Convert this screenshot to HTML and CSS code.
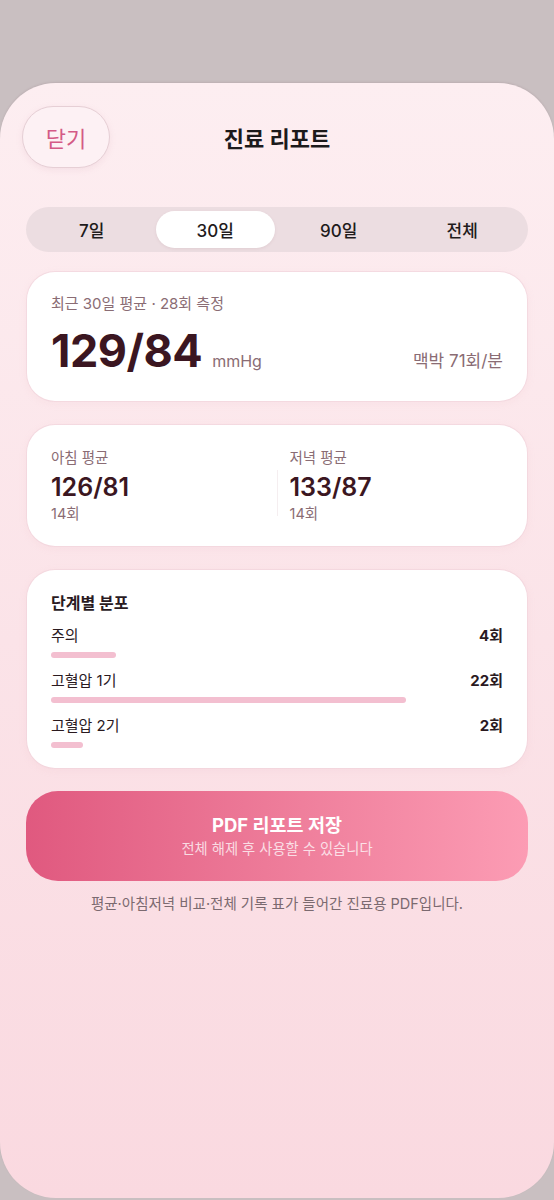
FILE: index.html
```html
<!DOCTYPE html>
<html lang="ko">
<head>
  <meta charset="UTF-8">
  <meta name="viewport" content="width=device-width, initial-scale=1.0">
  <title>진료 리포트</title>
  <link rel="stylesheet" href="styles.css">
</head>
<body>
  <div class="sheet">
    <!-- Top bar -->
    <header class="topbar">
      <button class="close-btn">닫기</button>
      <h1>진료 리포트</h1>
      <span></span>
    </header>

    <!-- Period selector -->
    <nav class="segments">
      <span class="seg">7일</span>
      <span class="seg active">30일</span>
      <span class="seg">90일</span>
      <span class="seg">전체</span>
    </nav>

    <!-- Summary -->
    <section class="card summary">
      <p class="muted lead">최근 30일 평균 · 28회 측정</p>
      <div class="summary-row">
        <span class="big">129/84</span>
        <span class="unit">mmHg</span>
        <span class="pulse">맥박 71회/분</span>
      </div>
    </section>

    <!-- Morning / evening -->
    <section class="card split">
      <div class="col">
        <p class="muted">아침 평균</p>
        <p class="mid">126/81</p>
        <p class="muted count">14회</p>
      </div>
      <div class="divider"></div>
      <div class="col">
        <p class="muted">저녁 평균</p>
        <p class="mid">133/87</p>
        <p class="muted count">14회</p>
      </div>
    </section>

    <!-- Distribution -->
    <section class="card dist">
      <h2>단계별 분포</h2>
      <div class="dist-row">
        <div class="dist-head"><span>주의</span><b>4회</b></div>
        <div class="bar" style="width: 14.3%"></div>
      </div>
      <div class="dist-row">
        <div class="dist-head"><span>고혈압 1기</span><b>22회</b></div>
        <div class="bar" style="width: 78.6%"></div>
      </div>
      <div class="dist-row">
        <div class="dist-head"><span>고혈압 2기</span><b>2회</b></div>
        <div class="bar" style="width: 7.1%"></div>
      </div>
    </section>

    <button class="pdf-btn">
      <span class="pdf-title">PDF 리포트 저장</span>
      <span class="pdf-sub">전체 해제 후 사용할 수 있습니다</span>
    </button>

    <p class="note">평균·아침저녁 비교·전체 기록 표가 들어간 진료용 PDF입니다.</p>
  </div>
</body>
</html>
```

FILE: styles.css
```css
/* General */
body {
  margin: 0;
  background: #c9bfc1;
  font-family: Inter, "Noto Sans CJK KR", sans-serif;
  color: #2a1a1f;
}

p, h1, h2 {
  margin: 0;
}

.sheet {
  margin-top: 83px;
  min-height: 1115px;
  box-sizing: border-box;
  padding: 23px 26px 0;
  border-radius: 56px;
  background: linear-gradient(180deg, #fdeef1 0%, #fbe3e8 50%, #fad9e0 100%);
  box-shadow: 0 -1px 2px rgba(120, 90, 100, 0.15);
}

/* Top bar */
.topbar {
  display: grid;
  grid-template-columns: 1fr auto 1fr;
  align-items: center;
  margin-left: -4px;
}

.close-btn {
  width: 88px;
  height: 62px;
  border: 1px solid #e6cfd5;
  border-radius: 31px;
  background: #fdf1f4;
  box-shadow: 0 2px 6px rgba(200, 150, 165, 0.15);
  color: #d45a86;
  font-family: inherit;
  font-size: 22px;
  justify-self: start;
}

.topbar h1 {
  font-size: 22px;
  font-weight: 700;
  color: #1c1a1b;
  margin-left: 4px;
}

/* Segmented control */
.segments {
  margin-top: 39px;
  height: 45px;
  box-sizing: border-box;
  padding: 4px;
  border-radius: 23px;
  background: #ecdde1;
  display: grid;
  grid-template-columns: repeat(4, 1fr);
}

.seg {
  display: flex;
  align-items: center;
  justify-content: center;
  border-radius: 19px;
  font-size: 17px;
  font-weight: 500;
  color: #1f1b1c;
}

.seg.active {
  background: #fff;
  box-shadow: 0 1px 3px rgba(160, 120, 130, 0.15);
  margin: 0 2px;
}

/* Cards */
.card {
  margin: 24px 1px 0;
  background: #fff;
  border-radius: 28px;
  box-shadow: 0 0 0 1px rgba(240, 210, 218, 0.6), 0 2px 8px rgba(220, 170, 185, 0.12);
  box-sizing: border-box;
}

.muted {
  font-size: 14.5px;
  line-height: 20px;
  color: #8a6c74;
}

/* Summary card */
.summary {
  margin-top: 20px;
  height: 129px;
  padding: 22px 24px 0;
}

.lead {
  font-size: 15px;
}

.summary-row {
  display: flex;
  align-items: baseline;
  margin-top: 10px;
}

.big {
  font-size: 45px;
  font-weight: 700;
  letter-spacing: -0.5px;
  color: #3b1621;
  line-height: 54px;
}

.unit {
  margin-left: 10px;
  font-size: 16px;
  color: #8a6c74;
}

.pulse {
  margin-left: auto;
  font-size: 17px;
  color: #8a6c74;
}

/* Morning / evening */
.split {
  height: 121px;
  padding: 23px 24px 0;
  display: grid;
  grid-template-columns: 1fr 1px 1fr;
  column-gap: 12px;
}

.divider {
  background: #f5eef0;
  height: 46px;
  align-self: start;
  margin-top: 22px;
}

.mid {
  margin-top: 4px;
  font-size: 25px;
  line-height: 30px;
  font-weight: 600;
  color: #3b1621;
}

.count {
  margin-top: 2px;
}

/* Distribution */
.dist {
  height: 198px;
  padding: 23px 24px 0;
}

.dist h2 {
  font-size: 16px;
  line-height: 20px;
  font-weight: 700;
  color: #2a1a1f;
}

.dist-row {
  margin-top: 13px;
}

.dist-head {
  display: flex;
  justify-content: space-between;
  font-size: 15px;
  line-height: 20px;
  color: #2a1a1f;
}

.dist-head b {
  font-weight: 700;
}

.bar {
  margin-top: 6px;
  height: 6px;
  border-radius: 3px;
  background: #f3bfd0;
}

/* PDF button */
.pdf-btn {
  margin-top: 23px;
  width: 100%;
  height: 90px;
  border: none;
  border-radius: 32px;
  background: linear-gradient(90deg, #e0597f 0%, #ef7f9c 55%, #fc9cb4 100%);
  display: flex;
  flex-direction: column;
  align-items: center;
  justify-content: center;
  gap: 2px;
  font-family: inherit;
  color: #fff;
}

.pdf-title {
  font-size: 18.5px;
  line-height: 24px;
  font-weight: 700;
}

.pdf-sub {
  font-size: 14.3px;
  line-height: 20px;
  color: rgba(255, 255, 255, 0.75);
}

.note {
  margin-top: 13px;
  text-align: center;
  font-size: 14.5px;
  line-height: 20px;
  color: #7b6a70;
}
```
